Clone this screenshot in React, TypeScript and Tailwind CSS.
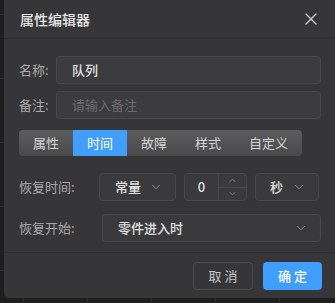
import { X, ChevronDown, ChevronUp } from "lucide-react";

const tabs = ["属性", "时间", "故障", "样式", "自定义"];

function Select({ value, className }: { value: string; className: string }) {
  return (
    <div
      className={`flex items-center justify-between h-[28px] rounded-[4px] border border-[#484848] bg-[#3a3a3c] ${className}`}
    >
      <span className="text-[13px] font-medium text-[#e2e2e2]">{value}</span>
      <ChevronDown className="w-[14px] h-[14px] text-[#9a9a9a]" strokeWidth={1.5} />
    </div>
  );
}

export default function App() {
  return (
    <div
      className="w-[335px] h-[303px] bg-[#1e1e1e] bg-[linear-gradient(to_right,#2b2b2b_1px,transparent_1px),linear-gradient(to_bottom,#2b2b2b_1px,transparent_1px)] bg-[size:64px_64px] bg-[position:23px_14px] overflow-hidden"
      style={{ fontFamily: '"Noto Sans CJK SC", "Noto Sans", sans-serif' }}
    >
      <div className="ml-[4px] w-[331px] h-[298px] bg-[#363638] rounded-bl-[5px] flex flex-col">
        {/* header */}
        <div className="h-[39px] shrink-0 flex items-center justify-between pl-[16px] pr-[14px] border-b border-[#2c2c2e]">
          <span className="text-[14px] font-medium text-[#e8e8e8]">属性编辑器</span>
          <X className="w-[20px] h-[20px] text-[#d0d0d0]" strokeWidth={1.6} />
        </div>

        {/* body */}
        <div className="flex-1 pl-[15px] pr-[14px] pt-[17px]">
          <div className="flex items-center h-[28px]">
            <span className="w-[37px] text-[13px] text-[#a9a9a9]">名称:</span>
            <div className="flex-1 h-[28px] rounded-[4px] border border-[#484848] bg-[#3c3c3e] flex items-center pl-[15px] text-[13px] font-medium text-[#e2e2e2]">
              队列
            </div>
          </div>
          <div className="flex items-center h-[28px] mt-[7px]">
            <span className="w-[37px] text-[13px] text-[#a9a9a9]">备注:</span>
            <div className="flex-1 h-[28px] rounded-[4px] border border-[#484848] bg-[#3c3c3e] flex items-center pl-[15px] text-[13px] text-[#6c6c6c]">
              请输入备注
            </div>
          </div>

          <div className="mt-[11px] inline-flex h-[26px] rounded-[4px] overflow-hidden bg-[linear-gradient(to_bottom,#5c5c5e,#4a4a4c)]">
            {tabs.map((t) => (
              <div
                key={t}
                className={
                  t === "时间"
                    ? "px-[14px] flex items-center text-[13px] text-white bg-[#409eff]"
                    : "px-[14px] flex items-center text-[13px] text-[#d4d4d4]"
                }
              >
                {t}
              </div>
            ))}
          </div>

          <div className="flex items-center h-[28px] mt-[17px]">
            <span className="w-[80px] text-[13px] text-[#a9a9a9]">恢复时间:</span>
            <Select value="常量" className="w-[77px] pl-[15px] pr-[12px]" />
            <div className="ml-[8px] w-[63px] h-[28px] rounded-[4px] border border-[#484848] bg-[#3a3a3c] flex">
              <div className="w-[33px] flex items-center justify-center text-[13px] font-medium text-[#e2e2e2]">0</div>
              <div className="flex-1 flex flex-col border-l border-[#484848]">
                <div className="flex-1 flex items-center justify-center border-b border-[#484848]">
                  <ChevronUp className="w-[11px] h-[11px] text-[#9a9a9a]" strokeWidth={1.5} />
                </div>
                <div className="flex-1 flex items-center justify-center">
                  <ChevronDown className="w-[11px] h-[11px] text-[#9a9a9a]" strokeWidth={1.5} />
                </div>
              </div>
            </div>
            <Select value="秒" className="ml-[8px] w-[64px] pl-[14px] pr-[12px]" />
          </div>

          <div className="flex items-center h-[28px] mt-[13px]">
            <span className="w-[83px] text-[13px] text-[#a9a9a9]">恢复开始:</span>
            <Select value="零件进入时" className="flex-1 pl-[15px] pr-[12px]" />
          </div>
        </div>

        {/* footer */}
        <div className="h-[46px] shrink-0 border-t border-[#2c2c2e] flex items-start justify-end gap-[10px] pt-[9px] pr-[13px]">
          <button className="w-[60px] h-[28px] pl-[3px] rounded-[4px] border border-[#4a4a4a] text-[13px] tracking-[3px] text-[#c8c8c8]">
            取消
          </button>
          <button className="w-[59px] h-[28px] pl-[3px] rounded-[4px] bg-[#409eff] text-[13px] tracking-[3px] text-white font-medium">
            确定
          </button>
        </div>
      </div>
    </div>
  );
}
